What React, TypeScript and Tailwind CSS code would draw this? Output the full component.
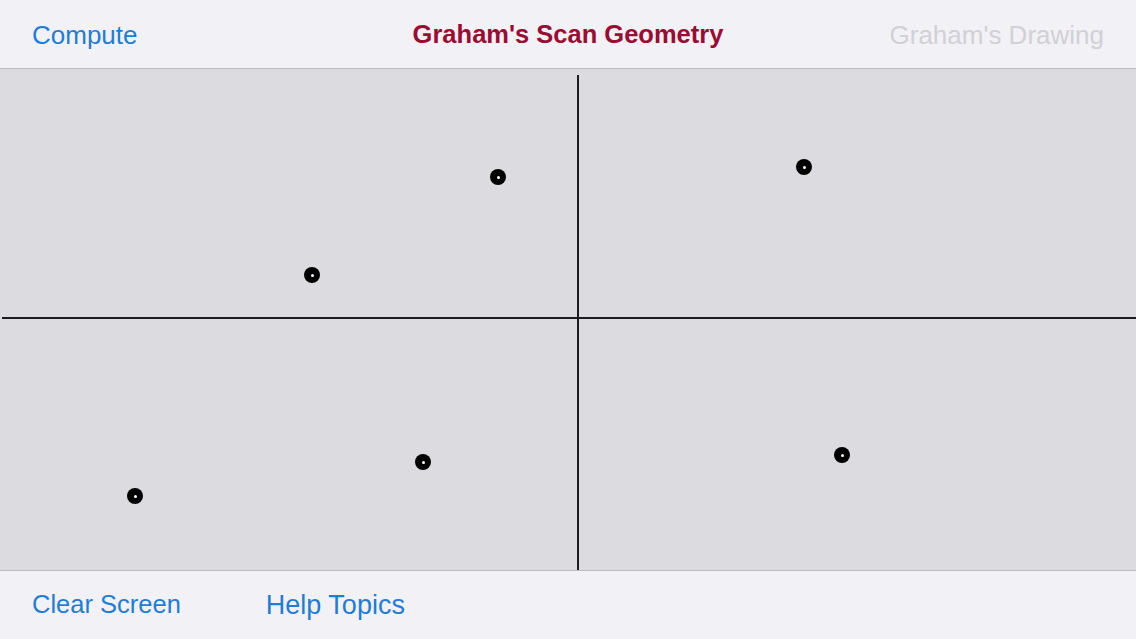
const points = [
  { x: 498, y: 177 },
  { x: 312, y: 275 },
  { x: 804, y: 167 },
  { x: 423, y: 462 },
  { x: 135, y: 496 },
  { x: 842, y: 455 },
];

// canvas starts at y=69 in the page
const TOP = 69;

function Dot({ x, y }: { x: number; y: number }) {
  return (
    <div
      className="absolute w-[16px] h-[16px] rounded-full bg-black flex items-center justify-center"
      style={{ left: x - 8, top: y - TOP - 8 }}
    >
      <div className="w-[3px] h-[3px] rounded-full bg-white" />
    </div>
  );
}

export default function App() {
  return (
    <div className="w-[1136px] h-[639px] flex flex-col bg-[#f2f1f6] font-['Liberation_Sans',Arial,sans-serif] overflow-hidden">
      <header className="h-[69px] shrink-0 grid grid-cols-[1fr_auto_1fr] items-center px-[32px] pt-[2px] border-b border-[#bdbcc1]">
        <button className="justify-self-start text-[26px] text-[#1f7dd6] leading-none">Compute</button>
        <h1 className="text-[25.5px] font-bold text-[#9c0b31] leading-none">Graham&apos;s Scan Geometry</h1>
        <button className="justify-self-end text-[26px] text-[#d1d0d5] leading-none">Graham&apos;s Drawing</button>
      </header>

      <main className="relative flex-1 bg-[#dcdbdf]">
        <div className="absolute left-[577px] top-[6px] bottom-0 w-[2px] bg-[#1c1c1e]" />
        <div className="absolute left-[2px] right-0 top-[248px] h-[2px] bg-[#1c1c1e]" />
        {points.map((p, i) => (
          <Dot key={i} x={p.x} y={p.y} />
        ))}
      </main>

      <footer className="h-[69px] shrink-0 flex items-center gap-[85px] px-[32px] border-t border-[#bdbcc1]">
        <button className="text-[25.5px] text-[#1f7dd6] leading-none">Clear Screen</button>
        <button className="text-[27px] text-[#1f7dd6] leading-none">Help Topics</button>
      </footer>
    </div>
  );
}
